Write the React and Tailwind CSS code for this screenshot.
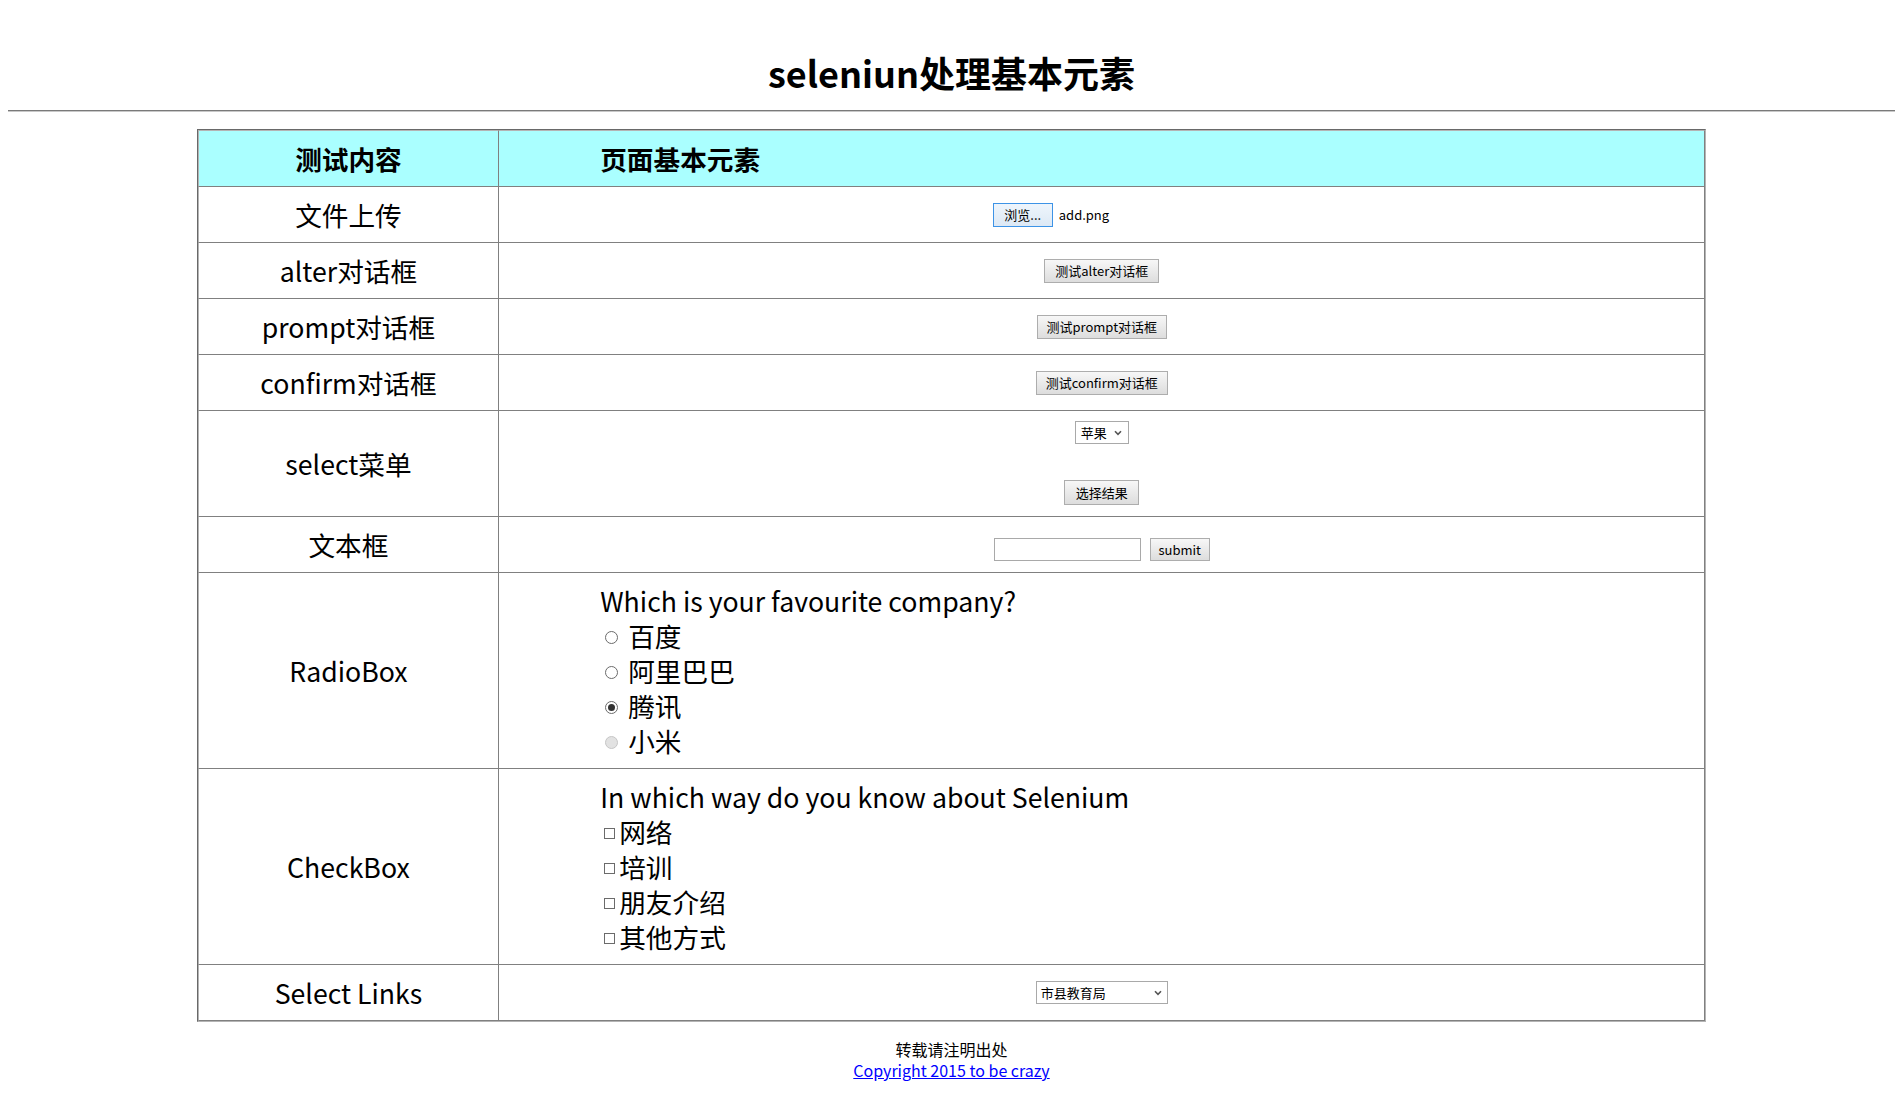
import React from 'react';

const btn = "inline-flex items-center justify-center border border-[#adadad] bg-gradient-to-b from-[#f7f7f7] to-[#dddddd] text-[13px] leading-none text-black";

function Chevron() {
    return (
        <svg width="8" height="6" viewBox="0 0 8 6" className="shrink-0">
            <path d="M1 1.2 L4 4.4 L7 1.2" fill="none" stroke="#555" strokeWidth="1.6" />
        </svg>
    );
}

function Radio({ label, checked, disabled }) {
    let circle = "border-[#6b6b6b] bg-white";
    if (disabled) circle = "border-[#c6c6c6] bg-[#e2e2e2]";
    return (
        <div className="flex items-center h-[35px]">
            <span className={`ml-[5px] mr-[10px] mt-[3px] w-[13px] h-[13px] rounded-full border flex items-center justify-center ${circle}`}>
                {checked && <span className="w-[7px] h-[7px] rounded-full bg-[#333]" />}
            </span>
            <span>{label}</span>
        </div>
    );
}

function Check({ label }) {
    return (
        <div className="flex items-center h-[35px]">
            <span className="ml-[4px] mr-[4px] mt-[3px] w-[11px] h-[11px] border border-[#6b6b6b] bg-white" />
            <span>{label}</span>
        </div>
    );
}

function App() {
    const labelCell = "w-[20%] text-center align-middle py-[10px] leading-[35px] border-l border-l-[#b4b4b4] border-r border-r-[#808080] border-b border-b-[#808080]";
    const contentCell = "align-middle py-[10px] border-r border-r-[#808080] border-b border-b-[#808080]";

    return (
        <div className="min-h-screen bg-white text-black px-[8px] pt-[48px] pb-[10px] font-['Noto_Sans_CJK_SC',sans-serif]">
            <h1 className="text-center text-[36px] font-bold leading-[48px]">seleniun处理基本元素</h1>
            <div className="mt-[14px] border-t border-t-[#7a7a7a] border-b border-b-[#c8c8c8]" />

            <table className="mt-[17px] w-[80%] mx-auto border-separate border-spacing-0 text-[26.67px] border-t border-l border-t-[#696969] border-l-[#696969] border-r border-b border-r-[#b4b4b4] border-b-[#b4b4b4]">
                <thead>
                    <tr className="bg-[#aaffff]">
                        <th className={`${labelCell} border-t border-t-[#b4b4b4] font-bold`}>测试内容</th>
                        <th className={`${contentCell} border-t border-t-[#b4b4b4] text-left pl-[101px] font-bold leading-[35px]`}>页面基本元素</th>
                    </tr>
                </thead>
                <tbody>
                    <tr>
                        <td className={labelCell}>文件上传</td>
                        <td className={contentCell}>
                            <div className="flex justify-center items-center h-[35px]">
                                <div className="w-[218px] flex items-center">
                                    <span className="w-[60px] h-[24px] inline-flex items-center justify-center border border-[#3d93e6] bg-gradient-to-b from-[#eef5fc] to-[#dde9f5] text-[13px] leading-none">浏览...</span>
                                    <span className="ml-[6px] text-[13px]">add.png</span>
                                </div>
                            </div>
                        </td>
                    </tr>
                    <tr>
                        <td className={labelCell}>alter对话框</td>
                        <td className={contentCell}>
                            <div className="flex justify-center items-center h-[35px]">
                                <span className={`${btn} w-[115px] h-[24px]`}>测试alter对话框</span>
                            </div>
                        </td>
                    </tr>
                    <tr>
                        <td className={labelCell}>prompt对话框</td>
                        <td className={contentCell}>
                            <div className="flex justify-center items-center h-[35px]">
                                <span className={`${btn} w-[130px] h-[24px]`}>测试prompt对话框</span>
                            </div>
                        </td>
                    </tr>
                    <tr>
                        <td className={labelCell}>confirm对话框</td>
                        <td className={contentCell}>
                            <div className="flex justify-center items-center h-[35px]">
                                <span className={`${btn} w-[132px] h-[24px]`}>测试confirm对话框</span>
                            </div>
                        </td>
                    </tr>
                    <tr>
                        <td className={labelCell}>select菜单</td>
                        <td className="align-middle pt-[10px] pb-[11px] border-r border-r-[#808080] border-b border-b-[#808080]">
                            <div className="flex flex-col items-center">
                                <span className="w-[54px] h-[23px] border border-[#a9a9a9] bg-white flex items-center justify-between pl-[5px] pr-[6px] text-[13px]">
                                    苹果
                                    <Chevron />
                                </span>
                                <span className={`${btn} mt-[36px] w-[75px] h-[25px]`}>选择结果</span>
                            </div>
                        </td>
                    </tr>
                    <tr>
                        <td className={labelCell}>文本框</td>
                        <td className="align-middle pt-[21px] pb-[11px] border-r border-r-[#808080] border-b border-b-[#808080]">
                            <div className="flex justify-center items-center h-[23px]">
                                <span className="w-[147px] h-[23px] border border-[#a9a9a9] bg-white" />
                                <span className={`${btn} ml-[9px] w-[60px] h-[23px]`}>submit</span>
                            </div>
                        </td>
                    </tr>
                    <tr>
                        <td className={labelCell}>RadioBox</td>
                        <td className={`${contentCell} pl-[101px] text-left leading-[35px]`}>
                            <div className="h-[35px]">Which is your favourite company?</div>
                            <Radio label="百度" />
                            <Radio label="阿里巴巴" />
                            <Radio label="腾讯" checked />
                            <Radio label="小米" disabled />
                        </td>
                    </tr>
                    <tr>
                        <td className={labelCell}>CheckBox</td>
                        <td className={`${contentCell} pl-[101px] text-left leading-[35px]`}>
                            <div className="h-[35px]">In which way do you know about Selenium</div>
                            <Check label="网络" />
                            <Check label="培训" />
                            <Check label="朋友介绍" />
                            <Check label="其他方式" />
                        </td>
                    </tr>
                    <tr>
                        <td className={labelCell}>Select Links</td>
                        <td className={contentCell}>
                            <div className="flex justify-center items-center h-[35px]">
                                <span className="w-[132px] h-[23px] border border-[#a9a9a9] bg-white flex items-center justify-between pl-[4px] pr-[5px] text-[13px]">
                                    市县教育局
                                    <Chevron />
                                </span>
                            </div>
                        </td>
                    </tr>
                </tbody>
            </table>

            <div className="mt-[17px] text-center text-[16px] leading-[21px]">
                <div>转载请注明出处</div>
                <a href="#" className="text-[#0000ff] underline">Copyright 2015 to be crazy</a>
            </div>
        </div>
    );
}

export default App;
